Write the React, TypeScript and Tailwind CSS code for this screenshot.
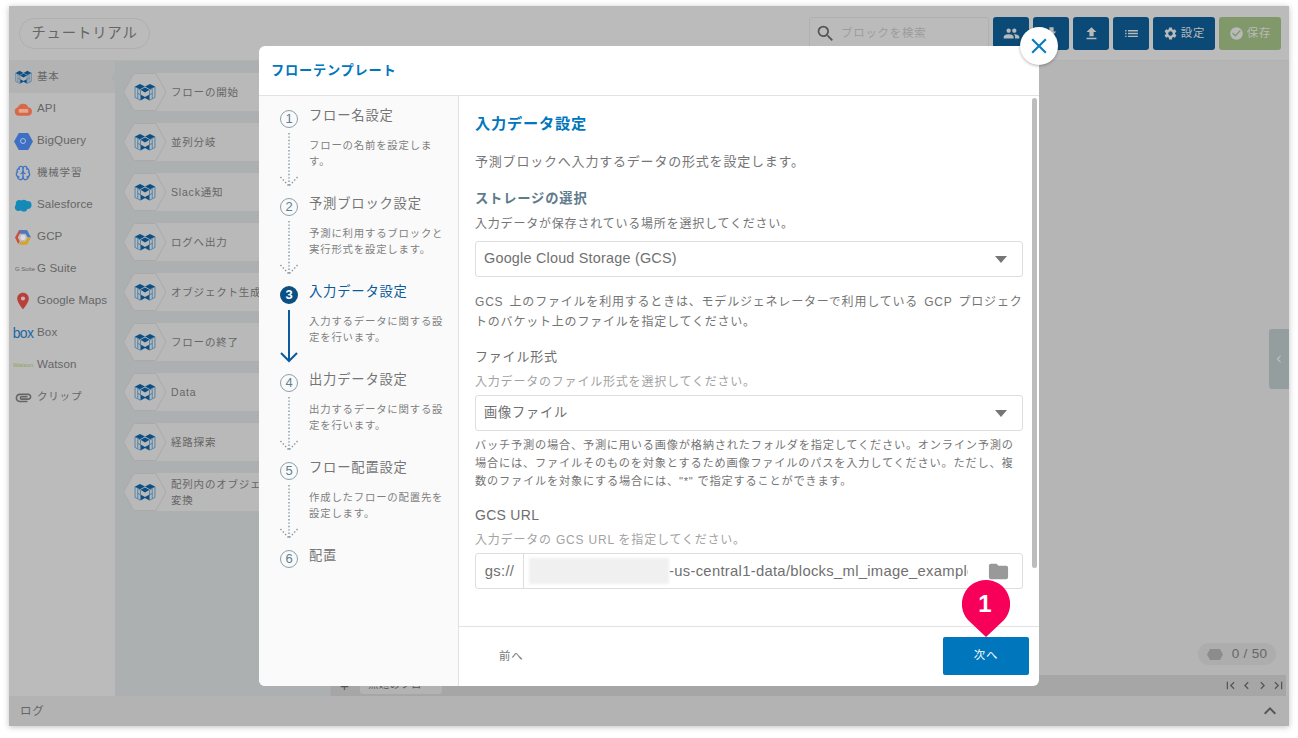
import React from "react";
import {
  MdPeople, MdFileDownload, MdFileUpload, MdList, MdSettings, MdCheckCircle, MdSearch, MdClose,
  MdFolder, MdKeyboardArrowUp, MdPlace, MdAttachment, MdChevronLeft, MdChevronRight, MdFirstPage, MdLastPage,
} from "react-icons/md";
import { Brain } from "lucide-react";

function BlockLogo({ className }: { className?: string }) {
  return (
    <svg viewBox="0 0 24 21" className={className}>
      <g fill="none" stroke="#2f6f9f" strokeWidth="0.8">
        <path d="M1 4 V16 L7 19 V8 Z" />
        <path d="M23 4 V16 L17 19 V8 Z" />
        <path d="M4 11.5 L7 13 M20 11.5 L17 13 M4 7 V17 M20 7 V17" />
      </g>
      <path d="M1 4 L6.5 1 L12 4 L6.5 7 Z M12 4 L17.5 1 L23 4 L17.5 7 Z M7 7.5 L12 5 L17 7.5 L12 10.5 Z" fill="#0b4f85" />
      <path d="M7.5 13 L12 15.5 L16.5 13 V19 L12 16.5 L7.5 19 Z" fill="#0b4f85" />
    </svg>
  );
}

function Hexagon({ color, className }: { color: string; className?: string }) {
  return (
    <svg viewBox="0 0 20 18" className={className}>
      <polygon points="0,9 5,0 15,0 20,9 15,18 5,18" fill={color} />
    </svg>
  );
}

const latin = "text-[11.6px] tracking-[0.01em] pb-[2px]";
const cjk = "text-[10.5px]";

const sidebar: { icon: React.ReactNode; label: string; size: string; active?: boolean }[] = [
  { icon: <BlockLogo className="w-[17px] h-[15px]" />, label: "基本", size: cjk, active: true },
  {
    icon: (
      <svg viewBox="0 0 20 13" className="w-[19px] h-[13px]">
        <path d="M5 13 A4.5 4.5 0 0 1 4 4.2 A6 6 0 0 1 15 4 A4.6 4.6 0 0 1 15.5 13 Z" fill="#d6694a" />
        <rect x="5" y="6" width="10" height="4" rx="1" fill="#e8a68f" />
      </svg>
    ),
    label: "API",
    size: latin,
  },
  {
    icon: (
      <span className="relative flex items-center justify-center">
        <Hexagon color="#3f6fc2" className="w-[19px] h-[17px]" />
        <span className="absolute w-[6px] h-[6px] rounded-full border border-[#a9c0e8]" />
      </span>
    ),
    label: "BigQuery",
    size: latin,
  },
  { icon: <Brain className="w-[16px] h-[16px] text-[#3f74c6]" />, label: "機械学習", size: cjk },
  {
    icon: (
      <svg viewBox="0 0 20 14" className="w-[18px] h-[13px]">
        <g fill="#1589b8">
          <circle cx="6" cy="5" r="4" />
          <circle cx="11" cy="4" r="3.5" />
          <circle cx="15" cy="6.5" r="4.5" />
          <circle cx="5" cy="9" r="4" />
          <circle cx="11" cy="10" r="3.8" />
        </g>
      </svg>
    ),
    label: "Salesforce",
    size: latin,
  },
  {
    icon: (
      <svg viewBox="0 0 20 18" className="w-[16px] h-[15px]">
        <polygon points="0,9 5,0 15,0 17,4 6,4 3.5,9 6,14 4,17" fill="#c9503f" />
        <polygon points="5,0 15,0 20,9 16,9 13,4 6,4" fill="#4a78c8" />
        <polygon points="20,9 15,18 5,18 7,14 13,14 16,9" fill="#d6a32c" />
        <circle cx="10" cy="9" r="3.2" fill="#dcdcdc" />
      </svg>
    ),
    label: "GCP",
    size: latin,
  },
  {
    icon: <span className="pl-[4px] text-[6px] tracking-normal text-[#666] leading-none whitespace-nowrap">G Suite</span>,
    label: "G Suite",
    size: latin,
  },
  { icon: <MdPlace className="text-[20px] text-[#b9403a]" />, label: "Google Maps", size: latin },
  {
    icon: <span className="text-[14px] tracking-tighter text-[#1a68a3] leading-none">box</span>,
    label: "Box",
    size: latin,
  },
  {
    icon: <span className="text-[6px] tracking-normal text-[#8aa558] leading-none">Watson</span>,
    label: "Watson",
    size: latin,
  },
  { icon: <MdAttachment className="text-[19px] text-[#666]" />, label: "クリップ", size: cjk },
];

const blocks = ["フローの開始", "並列分岐", "Slack通知", "ログへ出力", "オブジェクト生成", "フローの終了", "Data", "経路探索", "配列内のオブジェクトを変換"];

const steps = [
  { n: "1", title: "フロー名設定", desc: "フローの名前を設定します。" },
  { n: "2", title: "予測ブロック設定", desc: "予測に利用するブロックと実行形式を設定します。" },
  { n: "3", title: "入力データ設定", desc: "入力するデータに関する設定を行います。", active: true },
  { n: "4", title: "出力データ設定", desc: "出力するデータに関する設定を行います。" },
  { n: "5", title: "フロー配置設定", desc: "作成したフローの配置先を設定します。" },
  { n: "6", title: "配置", desc: "" },
];

function Connector({ active }: { active?: boolean }) {
  if (active) {
    return (
      <svg viewBox="0 0 18 54" className="w-[18px] h-[54px] mt-[6px]" fill="none" stroke="#0b5a9c">
        <path d="M9 0 V51" strokeWidth="2" />
        <path d="M1 43 L9 51 L17 43" strokeWidth="2" />
      </svg>
    );
  }
  return (
    <svg viewBox="0 0 18 56" className="w-[18px] h-[56px] mt-[5px]" fill="none" stroke="#8193a0" strokeWidth="1.4" strokeDasharray="1.4 2">
      <path d="M9 0 V54" />
      <path d="M0.5 44 L9 53" />
      <path d="M17.5 44 L9 53" />
    </svg>
  );
}

function Select({ value, size }: { value: string; size: string }) {
  return (
    <div className={`h-[36px] rounded-[3px] border border-[#dedede] flex items-center justify-between pl-[8px] pr-[15px] ${size} text-[#707070]`}>
      <span>{value}</span>
      <span className="w-0 h-0 border-x-[6px] border-x-transparent border-t-[7px] border-t-[#767676]" />
    </div>
  );
}

export default function App() {
  return (
    <div className="w-[1298px] h-[738px] bg-white pt-[6px] pl-[9px] overflow-hidden font-['Liberation_Sans','Noto_Sans_CJK_JP',sans-serif] tracking-[0.05em]">
      <div className="relative w-[1280px] h-[720px] flex flex-col bg-[#b5b5b5] shadow-[0_1px_6px_rgba(0,0,0,0.25)]">
        {/* Header */}
        <header className="h-[55px] shrink-0 bg-[#bbbbbb] border-b border-[#b2b2b2] flex items-start pt-[11px] pl-[10px] pr-[8px]">
          <div className="mt-[1px] h-[31px] w-[131px] rounded-full border border-[#afafaf] flex items-center justify-center text-[14.4px] text-[#666666]">
            チュートリアル
          </div>
          <div className="ml-auto flex gap-[4px] text-[#b9b9b9]">
            <div className="w-[180px] h-[33px] border border-[#b0b0b0] rounded-[3px] flex items-center pl-[5px] gap-[5px] text-[11.4px] text-[#9c9c9c]">
              <MdSearch className="text-[21px] text-[#555555]" />
              <span>ブロックを検索</span>
            </div>
            {[MdPeople, MdFileDownload, MdFileUpload, MdList].map((I, i) => (
              <div key={i} className="w-[36px] h-[33px] rounded-[3px] bg-[#0b4977] flex items-center justify-center">
                <I className="text-[17px]" />
              </div>
            ))}
            <div className="w-[62px] h-[33px] rounded-[3px] bg-[#0b4977] flex items-center justify-center gap-[3px] text-[11.4px]">
              <MdSettings className="text-[15px]" />
              設定
            </div>
            <div className="w-[62px] h-[33px] rounded-[3px] bg-[#81996a] flex items-center justify-center gap-[3px] text-[11.4px]">
              <MdCheckCircle className="text-[15px]" />
              保存
            </div>
          </div>
        </header>

        {/* Middle */}
        <div className="flex-1 flex min-h-0">
          <aside className="w-[106px] shrink-0 bg-[#bbbbbb] flex flex-col">
            {sidebar.map((s) => (
              <div key={s.label} className={`relative h-[32px] shrink-0 flex items-center ${s.active ? "bg-[#b3b3b3]" : ""}`}>
                <span className="w-[28px] flex items-center justify-center shrink-0">{s.icon}</span>
                <span className={`${s.size} text-[#666666] whitespace-nowrap`}>{s.label}</span>
                {s.active && <span className="absolute right-[-3px] top-[14px] w-[6px] h-[6px] rotate-45 bg-[#acb0b0]" />}
              </div>
            ))}
          </aside>
          <div className="w-[215px] shrink-0 bg-[#acb0b0] pt-[12px] pl-[8px] pr-[10px] flex flex-col gap-[12px]">
            {blocks.map((b) => (
              <div key={b} className="h-[38px] flex shrink-0">
                <div className="relative z-10 w-[44px] h-[38px] shrink-0 flex items-center justify-center">
                  <svg viewBox="0 0 44 38" className="absolute inset-0 w-[44px] h-[38px]">
                    <polygon points="0.5,19 11,0.5 33,0.5 43,19 33,37.5 11,37.5" fill="#b9b9b9" stroke="#aaaaaa" />
                  </svg>
                  <BlockLogo className="relative w-[22px] h-[19px]" />
                </div>
                <div className="ml-[-11px] flex-1 bg-[#b9b9b9] pl-[15px] flex items-center text-[10.5px] leading-[16px] text-[#666666]">
                  <span className="max-w-[125px]">{b}</span>
                </div>
              </div>
            ))}
          </div>
          <main className="relative flex-1 flex flex-col justify-end border-l border-[#ababab]">
            <div className="self-end mr-[13px] mb-[10px] h-[22px] w-[78px] rounded-full bg-[#adadad] flex items-center justify-center gap-[9px] text-[13.5px] text-[#666666]">
              <svg viewBox="0 0 16 11" className="w-[16px] h-[11px]">
                <polygon points="0,5.5 3,0 13,0 16,5.5 13,11 3,11" fill="#8c8c8c" />
              </svg>
              <span className="tracking-[0.02em]">0 / 50</span>
            </div>
            <div className="h-[21px] bg-[#a6a6a6] mr-[3px] flex items-center text-[#555555]">
              <span className="ml-[9px] text-[15px] leading-none">+</span>
              <div className="ml-[10px] h-[19px] mb-[2px] w-[82px] bg-[#b3b3b3] rounded-b-[3px] flex items-center justify-center text-[10px]">
                無題のフロー
              </div>
              <div className="ml-auto flex items-center gap-[1px] text-[15px]">
                <MdFirstPage />
                <MdChevronLeft />
                <MdChevronRight />
                <MdLastPage />
              </div>
            </div>
            <div className="absolute right-0 top-[268px] w-[20px] h-[60px] bg-[#959e9f] rounded-l-[3px] flex items-center justify-center">
              <MdChevronLeft className="text-[#b9c0c0] text-[14px]" />
            </div>
          </main>
        </div>

        {/* Log */}
        <footer className="h-[30px] shrink-0 bg-[#b3b3b3] flex items-center justify-between pl-[11px] pr-[7px] text-[11.5px] text-[#666666]">
          <span className="pt-[2px]">ログ</span>
          <MdKeyboardArrowUp className="text-[24px] text-[#555555]" />
        </footer>

        {/* Dialog */}
        <div className="absolute left-[250px] top-[40px] w-[780px] h-[640px] bg-white rounded-[6px] flex flex-col">
          <div className="h-[50px] shrink-0 border-b border-[#e2e2e2] flex items-center pl-[12px] pt-[1px] text-[13.2px] font-bold text-[#0076bd]">
            フローテンプレート
          </div>
          <div className="flex-1 flex min-h-0">
            <nav className="w-[200px] shrink-0 bg-[#fafafa] border-r border-[#e2e2e2] rounded-bl-[6px] pl-[21px] pt-[11px]">
              {steps.map((s) => (
                <div key={s.n} className="h-[88px] flex gap-[11px]">
                  <div className="w-[18px] shrink-0 flex flex-col">
                    <span
                      className={`w-[18px] h-[18px] mt-[3px] shrink-0 rounded-full flex items-center justify-center text-[13px] tracking-normal ${
                        s.active ? "bg-[#0b4f85] text-white font-bold" : "border border-[#8aa0ad] text-[#5f7f93]"
                      }`}
                    >
                      {s.n}
                    </span>
                    {s.n !== "6" && <Connector active={s.active} />}
                  </div>
                  <div className="w-[136px]">
                    <div className={`text-[13.3px] leading-[18px] whitespace-nowrap ${s.active ? "text-[#0b5a9c]" : "text-[#757575]"}`}>{s.title}</div>
                    <div className="mt-[13px] text-[10.4px] leading-[16px] text-[#808080]">{s.desc}</div>
                  </div>
                </div>
              ))}
            </nav>
            <div className="flex-1 min-w-0 flex flex-col">
              <div className="relative flex-1 min-h-0 overflow-hidden pl-[16px] pr-[16px] text-[#757575]">
                <h2 className="mt-[16px] text-[15.2px] leading-[24px] font-bold text-[#0076bd]">入力データ設定</h2>
                <p className="mt-[16px] text-[13px] leading-[20px]">予測ブロックへ入力するデータの形式を設定します。</p>
                <div className="mt-[17px] text-[13.3px] leading-[20px] font-bold text-[#5f7c8c]">ストレージの選択</div>
                <p className="mt-[6px] mb-[8px] text-[12px] leading-[18px]">入力データが保存されている場所を選択してください。</p>
                <Select value="Google Cloud Storage (GCS)" size="text-[14.4px] tracking-[0.015em]" />
                <p className="mt-[15px] text-[12px] leading-[20px] [word-spacing:2px]">
                  GCS 上のファイルを利用するときは、モデルジェネレーターで利用している GCP プロジェクトのバケット上のファイルを指定してください。
                </p>
                <div className="mt-[15px] text-[13px] leading-[20px] text-[#6e6e6e]">ファイル形式</div>
                <p className="mt-[6px] mb-[4px] text-[12px] leading-[18px] text-[#a3a3a3]">入力データのファイル形式を選択してください。</p>
                <Select value="画像ファイル" size="text-[13.2px]" />
                <p className="mt-[5px] text-[11.2px] leading-[18px]">
                  バッチ予測の場合、予測に用いる画像が格納されたフォルダを指定してください。オンライン予測の場合には、ファイルそのものを対象とするため画像ファイルのパスを入力してください。ただし、複数のファイルを対象にする場合には、"*" で指定することができます。
                </p>
                <div className="mt-[15px] text-[14px] leading-[20px] text-[#6e6e6e] tracking-[0.02em]">GCS URL</div>
                <p className="mt-[6px] mb-[4px] text-[12px] leading-[18px] text-[#a3a3a3]">入力データの GCS URL を指定してください。</p>
                <div className="h-[36px] rounded-[3px] border border-[#dedede] flex items-center text-[14.8px] tracking-[0.02em] text-[#707070]">
                  <span className="w-[48px] h-full shrink-0 border-r border-[#dedede] flex items-center justify-center">gs://</span>
                  <span className="ml-[5px] w-[140px] h-[26px] shrink-0 bg-[#f0f0f0] blur-[1.5px]" />
                  <span className="w-[299px] overflow-hidden whitespace-nowrap">-us-central1-data/blocks_ml_image_example</span>
                  <MdFolder className="ml-auto mr-[12px] text-[23px] text-[#999999]" />
                </div>
                <div className="absolute right-[2px] top-[2px] w-[5px] h-[470px] bg-[#bdbdbd] rounded-full" />
              </div>
              <div className="h-[60px] shrink-0 border-t border-[#e2e2e2] flex items-center justify-between pl-[40px] pr-[10px] pb-[2px] text-[11.4px]">
                <span className="text-[#757575] mt-[2px]">前へ</span>
                <span className="w-[86px] h-[38px] rounded-[2px] bg-[#0076bd] text-white flex items-center justify-center">次へ</span>
              </div>
            </div>
          </div>
        </div>

        {/* Close */}
        <div className="absolute left-[1011px] top-[21px] w-[38px] h-[38px] rounded-full bg-white shadow-[0_1px_3px_rgba(0,0,0,0.3)] flex items-center justify-center">
          <MdClose className="text-[26px] text-[#0a7cc2]" />
        </div>

        {/* Pin */}
        <div className="absolute left-[953px] top-[574px] w-[48px] h-[58px]">
          <svg viewBox="0 0 48 58" className="absolute inset-0 w-[48px] h-[58px]">
            <path d="M24 0 A24 24 0 0 1 42 40 L24 57 L6 40 A24 24 0 0 1 24 0 Z" fill="#f6005a" />
          </svg>
          <span className="absolute inset-x-0 top-[10px] pr-[2px] text-center text-[24px] leading-[28px] font-bold text-white tracking-normal">1</span>
        </div>
      </div>
    </div>
  );
}
